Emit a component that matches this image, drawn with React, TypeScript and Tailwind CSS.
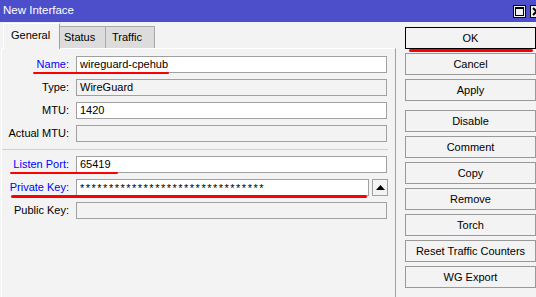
import React from "react";

type FieldProps = {
  label: string;
  value?: string;
  blue?: boolean;
  disabled?: boolean;
  arrow?: boolean;
  valueClass?: string;
};

const Field = ({ label, value = "", blue, disabled, arrow, valueClass = "" }: FieldProps) => {
  return (
    <div className="flex items-center h-[17px]">
      <span
        className={`w-[67px] text-right whitespace-nowrap ${
          blue ? "text-[#0000ff]" : "text-black"
        }`}
      >
        {label}
      </span>
      <div
        className={`ml-[7px] h-[17px] border border-[#a0a0a0] flex items-center pl-[3px] leading-none whitespace-nowrap ${
          disabled ? "bg-[#f3f3f3]" : "bg-white"
        } ${arrow ? "w-[293px]" : "w-[311px]"}`}
      >
        <span className={valueClass}>{value}</span>
      </div>
      {arrow && (
        <button className="ml-[3px] w-[16px] h-[17px] border border-[#a0a0a0] bg-[#f3f3f3] flex items-center justify-center">
          <svg width="9" height="5" viewBox="0 0 9 5">
            <path d="M0 5 L4.5 0 L9 5 Z" fill="#000" />
          </svg>
        </button>
      )}
    </div>
  );
};

const Btn = ({ label, main, className = "" }: { label: string; main?: boolean; className?: string }) => (
  <button
    className={`w-[131px] h-[22px] bg-[#f3f3f3] flex items-center justify-center text-black leading-none ${
      main ? "border border-black" : "border border-[#999]"
    } ${className}`}
  >
    {label}
  </button>
);

const App = () => {
  return (
    <div className="relative w-[536px] h-[297px] overflow-hidden bg-[#f3f3f3] text-[11px] font-['Liberation_Sans',Arial,sans-serif]">
      {/* title bar */}
      <div className="h-[22px] bg-[#4c4fc9] flex items-center pl-[3px] text-white text-[11.5px]">
        <span>New Interface</span>
        <div className="ml-auto flex gap-[4px] mr-[-7px]">
          <div className="w-[13px] h-[13px] border border-black bg-[#f0f0f0] flex items-center justify-center">
            <div className="w-[9px] h-[9px] border border-black border-t-2" />
          </div>
          <div className="w-[13px] h-[13px] border border-black bg-[#f0f0f0] flex items-center justify-center">
            <svg width="9" height="9" viewBox="0 0 9 9">
              <path d="M1 1 L8 8 M8 1 L1 8" stroke="#000" strokeWidth="2" />
            </svg>
          </div>
        </div>
      </div>

      <div className="flex">
        {/* left side */}
        <div className="w-[396px] flex flex-col">
          <div className="h-[26px] flex items-end pl-[3px]">
            <div className="relative z-10 h-[26px] -mb-px w-[57px] bg-[#f3f3f3] border-t border-l border-white border-r border-r-[#a0a0a0] flex items-center pl-[7px] pb-[2px]">
              General
            </div>
            <div className="h-[22px] w-[46px] bg-[#dcdcdc] border-t border-r border-[#a8a8a8] flex items-center pl-[4px]">
              Status
            </div>
            <div className="h-[22px] w-[49px] bg-[#dcdcdc] border-t border-r border-[#a8a8a8] flex items-center pl-[6px]">
              Traffic
            </div>
          </div>
          <div className="ml-[1px] w-[395px] h-[249px] border-t border-l border-white border-r border-r-[#a0a0a0] pt-[7px] flex flex-col">
            <div className="flex flex-col gap-[6px]">
              <Field label="Name:" value="wireguard-cpehub" blue />
              <Field label="Type:" value="WireGuard" disabled />
              <Field label="MTU:" value="1420" />
              <Field label="Actual MTU:" disabled />
            </div>
            <div className="mt-[7px] mb-[6px] h-px w-[386px] bg-[#d0d0d0]" />
            <div className="flex flex-col gap-[6px]">
              <Field label="Listen Port:" value="65419" blue />
              <Field
                label="Private Key:"
                value="********************************"
                valueClass="tracking-[1.5px] pt-[2px]"
                blue
                arrow
              />
              <Field label="Public Key:" disabled />
            </div>
          </div>
        </div>

        {/* buttons */}
        <div className="ml-[9px] pt-[5px] flex flex-col gap-[4px]">
          <Btn label="OK" main />
          <Btn label="Cancel" />
          <Btn label="Apply" />
          <Btn label="Disable" className="mt-[5px]" />
          <Btn label="Comment" />
          <Btn label="Copy" />
          <Btn label="Remove" />
          <Btn label="Torch" />
          <Btn label="Reset Traffic Counters" />
          <Btn label="WG Export" />
        </div>
      </div>

      {/* red marker lines */}
      <div className="absolute left-[409px] top-[49px] w-[124px] h-[3px] bg-[#ff0000] rounded-full" />
      <div className="absolute left-[33px] top-[72px] w-[136px] h-[2px] bg-[#ff0000] rounded-full" />
      <div className="absolute left-[10px] top-[172px] w-[108px] h-[2px] bg-[#ff0000] rounded-full" />
      <div className="absolute left-[11px] top-[195px] w-[356px] h-[3px] bg-[#ff0000] rounded-full" />
    </div>
  );
};

export default App;
